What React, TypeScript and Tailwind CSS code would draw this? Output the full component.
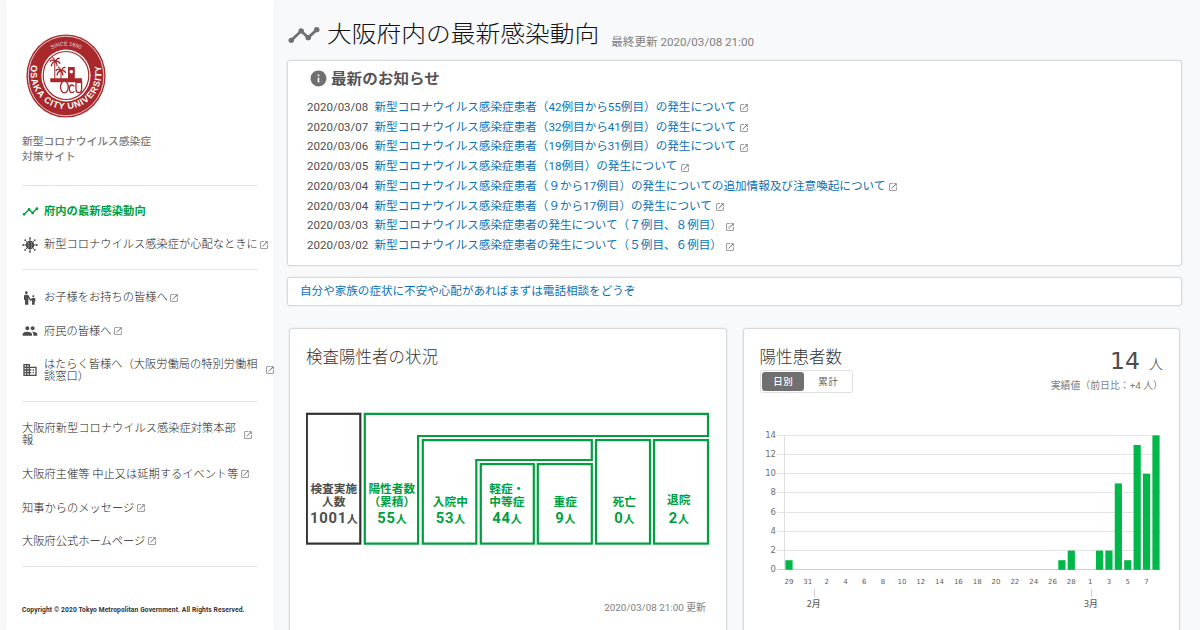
import React from "react";
import { MdTimeline, MdInfo, MdPeople, MdBusiness, MdEscalatorWarning, MdOpenInNew } from "react-icons/md";

const GREEN = "#00a040";

function Ext({ className = "" }: { className?: string }) {
  return <MdOpenInNew className={"size-[10px] shrink-0 text-[#808080] " + className} />;
}

function Palm({ x, y }: { x: number; y: number }) {
  return (
    <g transform={`translate(${x} ${y})`} fill="none" stroke="#a8282c" strokeWidth="1.3" strokeLinecap="round">
      <path d="M0 0Q-3 -3 -5 -0.500M0 0Q-3 0 -4 4M0 0Q-1 -3 -2.500 -4M0 0Q2 -4 4 -3.500M0 0Q3 -1.500 4.500 1.500M0 0Q2 2 1.800 4" />
    </g>
  );
}

function Logo() {
  return (
    <svg className="block h-[84px] w-20" viewBox="0 0 80 84" preserveAspectRatio="none">
      <defs>
        <path id="ringTop" d="M10.5 42 A29.5 30.5 0 0 1 69.5 42" />
        <path id="ringBottom" d="M6.200 28 A35.4 36.4 0 1 0 73.800 28" />
      </defs>
      <ellipse cx="40" cy="42" rx="39.6" ry="41.6" fill="#a8282c" />
      <ellipse cx="40" cy="42" rx="37.800" ry="39.800" fill="none" stroke="#f3dcdc" strokeWidth="0.9" />
      <ellipse cx="40" cy="41.5" rx="24.6" ry="26" fill="#fff" />
      <ellipse cx="40" cy="41.5" rx="22.8" ry="24" fill="none" stroke="#a8282c" strokeWidth="1.200" />
      <text fontFamily="Liberation Sans, sans-serif" fontSize="5.4" fill="#f3dcdc">
        <textPath href="#ringTop" startOffset="50%" textAnchor="middle">SINCE 1880</textPath>
      </text>
      <text fontFamily="Liberation Sans, sans-serif" fontSize="9" fontWeight="bold" fill="#fff" letterSpacing="0.800">
        <textPath href="#ringBottom" startOffset="50%" textAnchor="middle">OSAKA CITY UNIVERSITY</textPath>
      </text>
      <g fill="#a8282c">
        <path d="M24.300 44.300H42V33h6.800v11.300H56v4H24.300z" />
        <path d="M28.300 28h1v17h-1zM34.500 38h1v8h-1z" />
      </g>
      <circle cx="45.300" cy="37.700" r="1.8" fill="#fff" />
      <Palm x={29.300} y={27.800} />
      <Palm x={35} y={37} />
      <g fill="#fff" stroke="#a8282c" strokeWidth="1.3">
        <ellipse cx="38.400" cy="53" rx="3.900" ry="5.900" />
        <path d="M48.300 52.500q-1-1.500-2.300-1.500q-2.600 0-2.600 3.800t2.600 3.800q1.600 0 2.300-1.300M50 48.300v7q0 3.300 2.800 3.300t2.800-3.300v-7z" />
      </g>
    </svg>
  );
}

function Virus() {
  const angles = [0, 45, 90, 135, 180, 225, 270, 315];
  return (
    <svg className="size-4" viewBox="0 0 16 16">
      <circle cx="8" cy="8" r="4.300" fill="#4d4d4d" />
      {angles.map((a) => (
        <g key={a} transform={`rotate(${a} 8 8)`}>
          <path d="M8 4V1.500" stroke="#4d4d4d" strokeWidth="0.9" />
          <circle cx="8" cy="1.200" r="0.950" fill="#4d4d4d" />
        </g>
      ))}
      <path d="M6.500 5v6M9.500 5v6" stroke="#909090" strokeWidth="0.6" />
    </svg>
  );
}

function NavItem({ icon, children, className = "" }: { icon?: React.ReactNode; children: React.ReactNode; className?: string }) {
  return (
    <div className={"flex items-center whitespace-nowrap text-[11.26px] leading-[12px] text-[#222] " + className}>
      {icon && <span className="flex w-[22px] shrink-0 items-center text-[#4d4d4d]">{icon}</span>}
      {children}
    </div>
  );
}

function NavText({ children }: { children: React.ReactNode }) {
  return <span className="pt-[1.500px]">{children}</span>;
}

function Rule() {
  return <div className="h-px w-[236px] shrink-0 bg-[#e4e4e4]" />;
}

function Sidebar() {
  return (
    <aside className="flex h-[630px] w-[268px] shrink-0 flex-col bg-white pl-4 font-light shadow-[0_0_2px_rgba(0,0,0,0.08)]">
      <div className="h-[135px] shrink-0 pl-1 pt-[34px]">
        <Logo />
      </div>
      <div className="h-[50px] shrink-0 text-[10.75px] font-medium leading-[14.500px] text-[#7c7c7c]">
        新型コロナウイルス感染症
        <br />
        対策サイト
      </div>
      <Rule />
      <NavItem className="mt-[9px] h-[33px]" icon={<MdTimeline className="size-[17px] text-[#00a040]" />}>
        <span className="text-[11.300px] font-bold text-[#00a040]">府内の最新感染動向</span>
      </NavItem>
      <NavItem className="h-[33px]" icon={<Virus />}>
        <NavText>新型コロナウイルス感染症が心配なときに</NavText>
        <Ext className="ml-[1.500px]" />
      </NavItem>
      <div className="h-[8px] shrink-0" />
      <Rule />
      <NavItem className="mt-[10.500px] h-[34px]" icon={<MdEscalatorWarning className="size-4" />}>
        <NavText>お子様をお持ちの皆様へ</NavText>
        <Ext className="ml-[1.500px]" />
      </NavItem>
      <NavItem className="h-[33px]" icon={<MdPeople className="size-4" />}>
        <NavText>府民の皆様へ</NavText>
        <Ext className="ml-[1.500px]" />
      </NavItem>
      <NavItem className="h-[45px]" icon={<MdBusiness className="size-4" />}>
        <NavText>
          はたらく皆様へ（大阪労働局の特別労働相
          <br />
          談窓口）
        </NavText>
        <Ext className="ml-[7px]" />
      </NavItem>
      <div className="h-[8px] shrink-0" />
      <Rule />
      <NavItem className="mt-[10.500px] h-[45px]">
        <NavText>
          大阪府新型コロナウイルス感染症対策本部
          <br />
          報
        </NavText>
        <Ext className="ml-[7px]" />
      </NavItem>
      <NavItem className="h-[34px]">
        <NavText>大阪府主催等 中止又は延期するイベント等</NavText>
        <Ext className="ml-[1.500px]" />
      </NavItem>
      <NavItem className="h-[33.500px]">
        <NavText>知事からのメッセージ</NavText>
        <Ext className="ml-[1.500px]" />
      </NavItem>
      <NavItem className="h-[33.500px]">
        <NavText>大阪府公式ホームページ</NavText>
        <Ext className="ml-[1.500px]" />
      </NavItem>
      <div className="h-[7.500px] shrink-0" />
      <Rule />
      <small className="mt-[38.500px] whitespace-nowrap text-[6.700px] font-bold leading-[10px] tracking-[0.1px] text-[#333]">
        Copyright © 2020 Tokyo Metropolitan Government. All Rights Reserved.
      </small>
    </aside>
  );
}

const news: [string, string][] = [
  ["2020/03/08", "新型コロナウイルス感染症患者（42例目から55例目）の発生について"],
  ["2020/03/07", "新型コロナウイルス感染症患者（32例目から41例目）の発生について"],
  ["2020/03/06", "新型コロナウイルス感染症患者（19例目から31例目）の発生について"],
  ["2020/03/05", "新型コロナウイルス感染症患者（18例目）の発生について"],
  ["2020/03/04", "新型コロナウイルス感染症患者（９から17例目）の発生についての追加情報及び注意喚起について"],
  ["2020/03/04", "新型コロナウイルス感染症患者（９から17例目）の発生について"],
  ["2020/03/03", "新型コロナウイルス感染症患者の発生について（７例目、８例目）"],
  ["2020/03/02", "新型コロナウイルス感染症患者の発生について（５例目、６例目）"],
];

function News() {
  return (
    <section className="h-[206px] shrink-0 rounded-[3px] border border-[#d9d9d9] bg-white pl-[19px] pt-[8px] shadow-[0_0_2px_rgba(0,0,0,0.12)]">
      <h3 className="flex h-[19px] items-center gap-[3px] pl-0.5 text-[15.600px] font-bold leading-[19px] text-[#555]">
        <MdInfo className="size-[19px] text-[#707070]" />
        <span className="scale-y-[0.93] pt-px">最新のお知らせ</span>
      </h3>
      <ul className="mt-[9.500px]">
        {news.map(([date, text], i) => (
          <li key={i} className="flex h-[19.750px] items-center whitespace-nowrap text-[11.600px] leading-[19px]">
            <time className="w-[67.500px] text-[11.530px] text-[#4d4d4d]">{date}</time>
            <a className="text-[#0b72b5]">{text}</a>
            <Ext className="ml-[3px] mt-[2px]" />
          </li>
        ))}
      </ul>
    </section>
  );
}

const boxLabels = [
  { x: 334, lines: ["検査実施", "人数"], ys: [493.500, 506.500], n: "1001", c: "#4d4d4d" },
  { x: 392, lines: ["陽性者数", "（累積）"], ys: [493.500, 506.500], n: "55", c: GREEN },
  { x: 450.500, lines: ["入院中"], ys: [506.500], n: "53", c: GREEN },
  { x: 507, lines: ["軽症・", "中等症"], ys: [493.500, 506.500], n: "44", c: GREEN },
  { x: 565.500, lines: ["重症"], ys: [506.500], n: "9", c: GREEN },
  { x: 624.500, lines: ["死亡"], ys: [506.500], n: "0", c: GREEN },
  { x: 679, lines: ["退院"], ys: [504.500], n: "2", c: GREEN },
];

function StatusCard() {
  return (
    <section className="flex h-[330px] w-[437.500px] shrink-0 flex-col rounded-[3px] border border-[#d9d9d9] bg-white px-4 pt-[16px] shadow-[0_0_2px_rgba(0,0,0,0.12)]">
      <h3 className="pt-px text-[16.500px] font-light leading-[23px] text-[#333]">検査陽性者の状況</h3>
      <svg className="mt-[40px] block h-[140px] w-[404px] shrink-0" viewBox="306.200 409.200 404 140">
        <g fill="none" stroke={GREEN} strokeWidth="2.200">
          <rect x="307" y="414" width="53.500" height="129.800" stroke="#333" />
          <path d="M365 414H708.200V436.200H418.300V543.800H365Z" />
          <path d="M423 440.300H592V460.200H476.500V543.800H423Z" />
          <rect x="481" y="464.300" width="53" height="79.500" />
          <rect x="538" y="464.300" width="54" height="79.500" />
          <rect x="596.200" y="440.300" width="54" height="103.500" />
          <rect x="654.200" y="440.300" width="54" height="103.500" />
        </g>
        {boxLabels.map((b) => (
          <g key={b.n} fill={b.c} textAnchor="middle" fontWeight="700">
            {b.lines.map((t, i) => (
              <text key={t} x={b.x} y={b.ys[i]} fontSize="11.700">{t}</text>
            ))}
            <text x={b.x + 0.500} y={b.n === "2" ? 522.800 : 523.300} fontSize="14.800" letterSpacing="0.700">
              {b.n}
              <tspan fontSize="11">人</tspan>
            </text>
          </g>
        ))}
      </svg>
      <p className="mt-[51px] pr-[3.500px] text-right text-[9.900px] leading-[16px] text-[#808080]">2020/03/08 21:00 更新</p>
    </section>
  );
}

const counts: Record<number, number> = { 0: 1, 29: 1, 30: 2, 33: 2, 34: 2, 35: 9, 36: 1, 37: 13, 38: 10, 39: 14 };
const dayLabels = ["29", "31", "2", "4", "6", "8", "10", "12", "14", "16", "18", "20", "22", "24", "26", "28", "1", "3", "5", "7"];

function Chart() {
  return (
    <svg className="block h-[190px] w-[404px] shrink-0" viewBox="760 425 404 190" fontFamily='"DejaVu Sans", "Noto Sans CJK JP", sans-serif'>
      {[0, 2, 4, 6, 8, 10, 12, 14].map((v) => {
        const y = Math.round(569 - v * 9.570) + 0.500;
        return (
          <g key={v}>
            <path d={`M777 ${y}H1160`} stroke={v ? "#e4e4e4" : "#cfcfcf"} />
            <text x="776" y={y + 2.800} fontSize="8.500" fill="#707070" textAnchor="end">{v}</text>
          </g>
        );
      })}
      <path d="M784.500 435V570" stroke="#dedede" />
      {Object.entries(counts).map(([i, v]) => (
        <rect key={i} x={785.400 + Number(i) * 9.410} y={569.800 - v * 9.600} width="7.200" height={v * 9.600} fill="#00b849" />
      ))}
      {dayLabels.map((d, i) => (
        <text key={i} x={789 + i * 18.820} y="584" fontSize="7" fill="#606060" textAnchor="middle">{d}</text>
      ))}
      <path d="M814.500 589V597M1091.500 589V597" stroke="#cfcfcf" />
      <g fontSize="8.800" fill="#606060" textAnchor="middle" fontWeight="500" fontFamily='"Noto Sans", "Noto Sans CJK JP", sans-serif'>
        <text x="813.700" y="606.500">2月</text>
        <text x="1091" y="606.500">3月</text>
      </g>
    </svg>
  );
}

function PatientsCard() {
  return (
    <section className="flex h-[330px] w-[437.500px] shrink-0 flex-col rounded-[3px] border border-[#d9d9d9] bg-white px-4 pt-[16px] shadow-[0_0_2px_rgba(0,0,0,0.12)]">
      <div className="flex h-[80px] shrink-0 justify-between">
        <div>
          <h3 className="pt-px text-[16.500px] font-light leading-[23px] text-[#333]">陽性患者数</h3>
          <div className="mt-px flex h-[23px] w-[93px] items-center rounded-[3px] border border-[#e0e0e0] px-px text-[9.500px] tracking-[0.6px]">
            <button className="h-[19px] w-[43px] rounded-[3px] bg-[#707070] pl-px font-medium leading-[19px] text-white">日別</button>
            <button className="h-[19px] w-[47px] pl-0.5 leading-[19px] text-[#606060]">累計</button>
          </div>
        </div>
        <div className="text-right text-[#4d4d4d]">
          <div className="-mt-px flex h-[34px] items-baseline justify-end gap-[9px] leading-[34px]">
            <span className="font-['DejaVu_Sans'] text-[23.500px]">14</span>
            <span className="text-[14px] font-light">人</span>
          </div>
          <p className="mt-[0.500px] text-[9.900px] leading-[14px] text-[#808080]">実績値（前日比：+4 人）</p>
        </div>
      </div>
      <Chart />
    </section>
  );
}

export default function App() {
  return (
    <div lang="ja" className="flex h-[630px] w-[1200px] overflow-hidden bg-[#f7f9fb] pl-1.5 font-[Roboto,'Noto_Sans_CJK_JP',sans-serif]">
      <Sidebar />
      <main className="flex min-w-0 flex-1 flex-col pl-[13px] pr-[18px]">
        <header className="flex h-[60px] shrink-0 items-start whitespace-nowrap">
          <MdTimeline preserveAspectRatio="none" className="mr-[6px] mt-[19px] h-[32px] w-[34px] text-[#707070]" />
          <h2 className="mt-[16px] scale-y-[0.93] text-[24.750px] font-light leading-[38px] text-[#111]">大阪府内の最新感染動向</h2>
          <span className="ml-[12px] mt-[34px] text-[11.600px] leading-[16px] text-[#808080]">最終更新 2020/03/08 21:00</span>
        </header>
        <News />
        <a className="mt-[11px] block h-[29px] shrink-0 rounded-[3px] border border-[#d9d9d9] bg-white pl-[12px] text-[11.570px] leading-[26px] text-[#0b72b5] shadow-[0_0_2px_rgba(0,0,0,0.12)]">
          自分や家族の症状に不安や心配があればまずは電話相談をどうぞ
        </a>
        <div className="mt-[22px] flex gap-4 pl-0.5">
          <StatusCard />
          <PatientsCard />
        </div>
      </main>
    </div>
  );
}
